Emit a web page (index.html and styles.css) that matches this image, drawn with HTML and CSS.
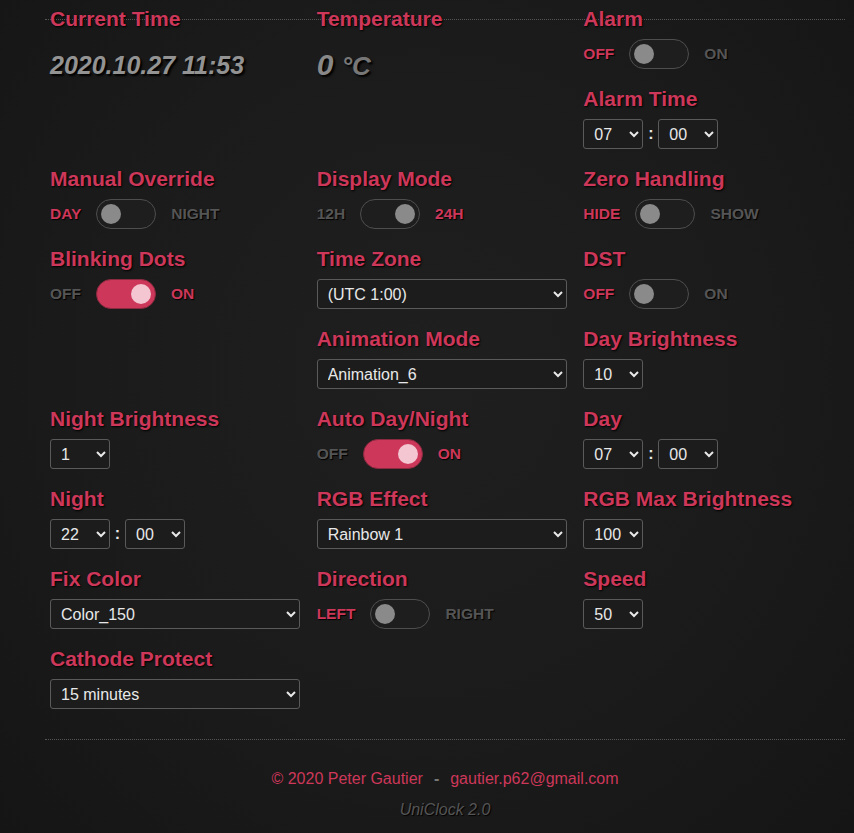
FILE: index.html
```html
<!DOCTYPE html>
<html lang="en">
<head>
  <meta charset="UTF-8" />
  <meta name="viewport" content="width=device-width, initial-scale=1.0"/>
  <title>UniClock 2.0</title>
  <link rel="stylesheet" href="styles.css">
</head>
<body>

<div class="wrap">
  <div class="grid">

    <div class="cell tall">
      <h3>Current Time</h3>
      <div class="value">2020.10.27 11:53</div>
    </div>

    <div class="cell tall">
      <h3>Temperature</h3>
      <div class="value temp">0 <span class="unit">°C</span></div>
    </div>

    <div class="cell">
      <h3>Alarm</h3>
      <div class="switch-row">
        <span class="lbl on">OFF</span>
        <span class="switch"><span class="knob"></span></span>
        <span class="lbl">ON</span>
      </div>
    </div>

    <div class="cell">
      <h3>Alarm Time</h3>
      <div class="sel-row">
        <select class="small"><option>07</option></select>
        <span class="colon">:</span>
        <select class="small"><option>00</option></select>
      </div>
    </div>

    <div class="cell">
      <h3>Manual Override</h3>
      <div class="switch-row">
        <span class="lbl on">DAY</span>
        <span class="switch"><span class="knob"></span></span>
        <span class="lbl">NIGHT</span>
      </div>
    </div>

    <div class="cell">
      <h3>Display Mode</h3>
      <div class="switch-row">
        <span class="lbl">12H</span>
        <span class="switch right"><span class="knob"></span></span>
        <span class="lbl on">24H</span>
      </div>
    </div>

    <div class="cell">
      <h3>Zero Handling</h3>
      <div class="switch-row">
        <span class="lbl on">HIDE</span>
        <span class="switch"><span class="knob"></span></span>
        <span class="lbl">SHOW</span>
      </div>
    </div>

    <div class="cell">
      <h3>Blinking Dots</h3>
      <div class="switch-row">
        <span class="lbl">OFF</span>
        <span class="switch checked"><span class="knob"></span></span>
        <span class="lbl on">ON</span>
      </div>
    </div>

    <div class="cell">
      <h3>Time Zone</h3>
      <select class="wide"><option>(UTC 1:00)</option></select>
    </div>

    <div class="cell">
      <h3>DST</h3>
      <div class="switch-row">
        <span class="lbl on">OFF</span>
        <span class="switch"><span class="knob"></span></span>
        <span class="lbl">ON</span>
      </div>
    </div>

    <div class="cell"></div>

    <div class="cell">
      <h3>Animation Mode</h3>
      <select class="wide"><option>Animation_6</option></select>
    </div>

    <div class="cell">
      <h3>Day Brightness</h3>
      <select class="small"><option>10</option></select>
    </div>

    <div class="cell">
      <h3>Night Brightness</h3>
      <select class="small"><option>1</option></select>
    </div>

    <div class="cell">
      <h3>Auto Day/Night</h3>
      <div class="switch-row">
        <span class="lbl">OFF</span>
        <span class="switch checked"><span class="knob"></span></span>
        <span class="lbl on">ON</span>
      </div>
    </div>

    <div class="cell">
      <h3>Day</h3>
      <div class="sel-row">
        <select class="small"><option>07</option></select>
        <span class="colon">:</span>
        <select class="small"><option>00</option></select>
      </div>
    </div>

    <div class="cell">
      <h3>Night</h3>
      <div class="sel-row">
        <select class="small"><option>22</option></select>
        <span class="colon">:</span>
        <select class="small"><option>00</option></select>
      </div>
    </div>

    <div class="cell">
      <h3>RGB Effect</h3>
      <select class="wide"><option>Rainbow 1</option></select>
    </div>

    <div class="cell">
      <h3>RGB Max Brightness</h3>
      <select class="small"><option>100</option></select>
    </div>

    <div class="cell">
      <h3>Fix Color</h3>
      <select class="wide"><option>Color_150</option></select>
    </div>

    <div class="cell">
      <h3>Direction</h3>
      <div class="switch-row">
        <span class="lbl on">LEFT</span>
        <span class="switch"><span class="knob"></span></span>
        <span class="lbl">RIGHT</span>
      </div>
    </div>

    <div class="cell">
      <h3>Speed</h3>
      <select class="small"><option>50</option></select>
    </div>

    <div class="cell">
      <h3>Cathode Protect</h3>
      <select class="wide"><option>15 minutes</option></select>
    </div>

  </div>

  <footer>
    <p class="credits">© 2020 Peter Gautier<span class="dash">-</span><a href="#">gautier.p62@gmail.com</a></p>
    <p class="version">UniClock 2.0</p>
  </footer>
</div>

</body>
</html>
```

FILE: styles.css
```css
body {
  margin: 0;
  font-family: 'Liberation Sans', Arial, sans-serif;
  background: radial-gradient(ellipse at 50% 45%, #1f1f1f 0%, #1b1b1b 55%, #151515 100%);
  color: #ddd;
  min-height: 833px;
}

.wrap {
  width: 800px;
  margin: 19px 0 0 45px;
  border-top: 1px dotted #555;
}

.grid {
  display: grid;
  grid-template-columns: repeat(3, 1fr);
  grid-auto-rows: 80px;
  margin-top: -13px;
}

.cell {
  padding-left: 5px;
}

.tall {
  grid-row: span 2;
}

h3 {
  margin: 0 0 8px;
  font-size: 21px;
  line-height: 24px;
  font-weight: bold;
  color: #cd3759;
  text-shadow: 1px 1px 2px #000;
}

/* Big readouts */
.value {
  margin-top: 19px;
  line-height: 30px;
  font-size: 25px;
  font-weight: bold;
  font-style: italic;
  color: #939393;
  text-shadow: 2px 2px 2px #000;
}

.temp {
  font-size: 30px;
  color: #888;
}

.temp .unit {
  font-size: 26px;
  color: #777;
}

/* Switches */
.switch-row {
  display: flex;
  align-items: center;
  height: 30px;
}

.lbl {
  font-size: 15.5px;
  font-weight: bold;
  color: #555;
  text-shadow: 1px 1px 1px #000;
}

.lbl.on {
  color: #cd3759;
}

.switch {
  box-sizing: border-box;
  width: 60px;
  height: 30px;
  margin: 0 15px;
  border: 1px solid #4e4e4e;
  border-radius: 15px;
  background: #1e1e1e;
  display: flex;
  align-items: center;
  padding: 0 4px;
}

.knob {
  width: 20px;
  height: 20px;
  border-radius: 50%;
  background: #8a8a8a;
}

.switch.right,
.switch.checked {
  justify-content: flex-end;
}

.switch.checked {
  background: #cd3759;
  border-color: #8a2a40;
}

.switch.checked .knob {
  background: #f3c6d2;
}

/* Selects */
select {
  color-scheme: dark;
  box-sizing: border-box;
  height: 30px;
  padding: 0 6px;
  font-family: 'Liberation Sans', Arial, sans-serif;
  font-size: 16px;
  color: #e8e8e8;
  background-color: #1c1c1c;
  border: 1px solid #5a5a5a;
  border-radius: 3px;
}

select.small {
  width: 60px;
  padding-right: 0;
}

select.wide {
  width: 250px;
}

.sel-row {
  display: flex;
  align-items: center;
}

.colon {
  width: 15px;
  text-align: center;
  font-size: 16px;
  font-weight: bold;
  color: #e8e8e8;
}

/* Footer */
footer {
  margin-top: 12px;
  border-top: 1px dotted #555;
  padding-top: 29px;
  text-align: center;
}

footer p {
  margin: 0;
  font-size: 16px;
  line-height: 20px;
}

.credits {
  color: #cd3759;
}

.credits a {
  color: #cd3759;
  text-decoration: none;
}

.dash {
  margin: 0 11px;
  color: #777;
  font-weight: bold;
}

.version {
  margin-top: 11px !important;
  font-style: italic;
  color: #555;
  text-shadow: 1px 1px 1px #000;
}
```
